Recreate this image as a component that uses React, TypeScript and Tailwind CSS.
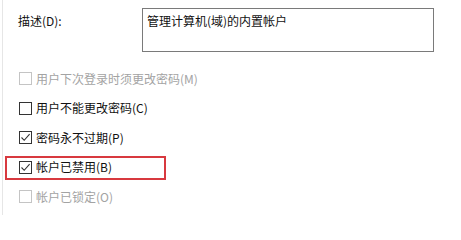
import React from "react";

const font = { fontFamily: '"Noto Sans CJK SC", "Noto Sans", sans-serif' };

function Box({ checked, disabled }: { checked?: boolean; disabled?: boolean }) {
  return (
    <div
      className={`w-[13px] h-[13px] border flex items-center justify-center bg-white shrink-0 ${
        disabled ? "border-[#c4c4c4]" : "border-[#333333]"
      }`}
    >
      {checked && (
        <svg width="11" height="11" viewBox="0 0 11 11">
          <polyline points="1.5,5.5 4.2,8.3 9.6,2.2" fill="none" stroke="#333333" strokeWidth="1.1" />
        </svg>
      )}
    </div>
  );
}

function Row({
  label,
  checked,
  disabled,
  highlight,
}: {
  label: string;
  checked?: boolean;
  disabled?: boolean;
  highlight?: boolean;
}) {
  return (
    <div className="relative h-[29.5px] flex items-center pl-[16px]">
      {highlight && (
        <div className="absolute left-[2px] top-[3px] w-[161px] h-[24px] border-2 border-[#d8393f]" />
      )}
      <Box checked={checked} disabled={disabled} />
      <span
        className={`ml-[4px] text-[12px] leading-[16px] ${disabled ? "text-[#a3a3a3]" : "text-[#111111]"}`}
      >
        {label}
      </span>
    </div>
  );
}

export default function App() {
  return (
    <div className="w-[461px] h-[215px] bg-white overflow-hidden" style={font}>
      <div className="ml-[2px] h-full border-l border-[#e6e6e6] flex flex-col">
        <div className="flex pt-[8px]">
          <div className="w-[139px] pl-[15px] pt-[5px] text-[12px] leading-[16px] text-[#111111]">描述(D):</div>
          <div className="w-[292px] h-[44px] border border-[#7a7a7a] px-[4px] pt-[4px] text-[12px] leading-[16px] text-[#111111]">
            管理计算机(域)的内置帐户
          </div>
        </div>
        <div className="mt-[12px] flex flex-col">
          <Row label="用户下次登录时须更改密码(M)" disabled />
          <Row label="用户不能更改密码(C)" />
          <Row label="密码永不过期(P)" checked />
          <Row label="帐户已禁用(B)" checked highlight />
          <Row label="帐户已锁定(O)" disabled />
        </div>
      </div>
    </div>
  );
}
